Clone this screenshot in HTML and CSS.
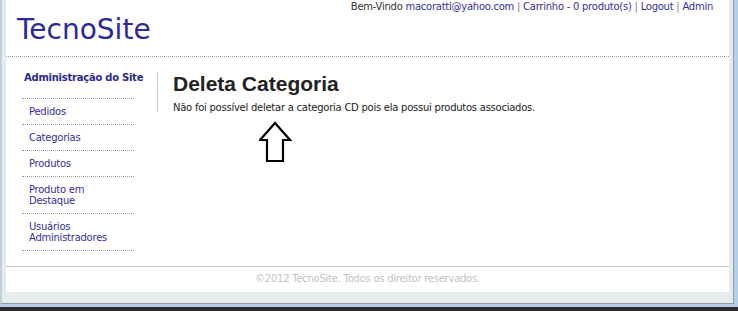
FILE: index.html
```html
<!DOCTYPE html>
<html lang="pt-BR">
<head>
<meta charset="UTF-8">
<title>TecnoSite - Deleta Categoria</title>
<link rel="stylesheet" href="styles.css">
</head>
<body>
<div class="screen">
  <div class="frame">
    <div class="page">
      <div class="header">
        <div class="login-bar">
          Bem-Vindo <a href="#">macoratti@yahoo.com</a> <span class="sep">|</span>
          <a href="#">Carrinho - 0 produto(s)</a> <span class="sep">|</span>
          <a href="#">Logout</a> <span class="sep">|</span>
          <a href="#">Admin</a>
        </div>
        <p class="logo">TecnoSite</p>
      </div>

      <div class="body-area">
        <div class="sidebar">
          <p class="side-title">Administração do Site</p>
          <ul class="side-menu">
            <li><a href="#">Pedidos</a></li>
            <li><a href="#">Categorias</a></li>
            <li><a href="#">Produtos</a></li>
            <li><a href="#">Produto em Destaque</a></li>
            <li><a href="#">Usuários Administradores</a></li>
          </ul>
        </div>

        <div class="main">
          <div class="content">
            <h1>Deleta Categoria</h1>
            <p class="msg">Não foi possível deletar a categoria CD pois ela possui produtos associados.</p>
          </div>
          <svg class="arrow" width="34" height="44" viewBox="0 0 34 44">
            <polygon points="16,2 1,19 8,19 8,40 24,40 24,19 31,19" fill="#fff" stroke="#000" stroke-width="2.2" stroke-linejoin="miter"/>
          </svg>
        </div>
      </div>

      <div class="footer">©2012 TecnoSite. Todos os direitor reservados.</div>
    </div>
  </div>
</div>
</body>
</html>
```

FILE: styles.css
```css
:root{
  --link: #3330a6;
  --navy: #2b2a8c;
  --text: #222;
  --small: "DejaVu Sans", Verdana, sans-serif;
}
*{ box-sizing: border-box; }
html,body{ margin:0; padding:0; }
body{ font-family: var(--small); font-size: 10px; letter-spacing: -0.25px; color: var(--text); }
a{ color: var(--link); text-decoration: none; }

.screen{
  width: 738px; height: 311px; background: #b7cfe9;
  border-bottom: 4px solid #2b2b2b;
}
.frame{
  width: 734px; height: 304px; background: #e6ebee;
  border-left: 2px solid #c3cfdb; border-right: 1px solid #8e9aa6; border-bottom: 1px solid #8e9aa6;
  padding-left: 4px;
}
.page{
  width: 723px; height: 292px; background: #fff;
  display: flex; flex-direction: column;
}

.header{
  height: 57px; border-bottom: 1px dotted #9c9c9c;
  padding: 0 16px 0 11px;
}
.login-bar{ text-align: right; line-height: 14px; color: #333; }
.login-bar .sep{ color: #7a7a9a; }
.logo{
  margin: 1px 0 0; font-size: 28px; line-height: 30px; letter-spacing: 0;
  color: #2c2a98;
}

.body-area{ height: 209px; display: flex; }
.sidebar{ width: 112px; margin-left: 16px; padding-top: 15px; }
.side-title{
  margin: 0; padding: 0 0 14px 2px; line-height: 12px; white-space: nowrap;
  font-weight: bold; color: var(--navy); border-bottom: 1px dotted #9c9c9c;
}
.side-menu{ list-style: none; margin: 0; padding: 0; }
.side-menu li{
  padding: 7px 20px 7px 7px; line-height: 11px;
  border-bottom: 1px dotted #9c9c9c;
}

.main{ margin-left: 23px; padding-top: 15px; }
.content{ border-left: 1px solid #c9c9c9; padding: 0 0 0 15px; height: 40px; }
.content h1{
  margin: 0; font-family: "Liberation Sans", Arial, sans-serif; font-size: 21px;
  line-height: 24px; letter-spacing: 0; color: #222;
}
.msg{ margin: 6px 0 0; line-height: 12px; white-space: nowrap; }
.arrow{ display: block; margin: 9px 0 0 102px; }

.footer{
  border-top: 1px solid #cdbfd0; flex: 1;
  padding-top: 6px; line-height: 12px; text-align: center; color: #c2c2c2;
}
```
